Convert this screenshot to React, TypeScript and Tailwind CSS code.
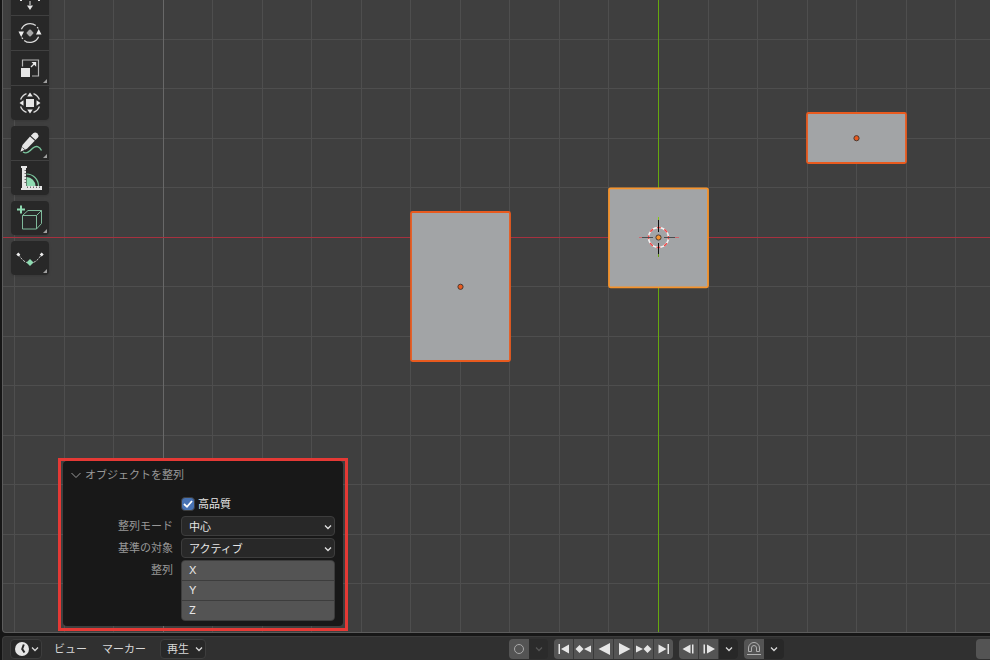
import React from 'react'

const STEP = 49.54
const ROW_STEP = 49.5

const GridLines = () => {
    const cols = Array.from({ length: 61 }, (_, i) => i - 30)
    return (
        <g shapeRendering="crispEdges">
            {cols.map((n) => (
                <rect key={`h${n}`} x={-3000} y={Math.round(n * ROW_STEP - 0.25)} width={6000} height={1} fill={n % 10 ? '#4e4e4e' : '#686868'} />
            ))}
            {cols.map((n) => (
                <rect key={`v${n}`} x={Math.round(n * STEP)} y={-3000} width={1} height={6000} fill={n % 10 ? '#4e4e4e' : '#686868'} />
            ))}
            <rect x={-3000} y={0} width={6000} height={1} fill="#a6313f" />
            <rect x={0} y={-3000} width={1} height={6000} fill="#67a80e" />
        </g>
    )
}

type MeshProps = { x: number; y: number; w: number; h: number; color: string }

const Mesh = ({ x, y, w, h, color }: MeshProps) => (
    <rect x={x - w / 2} y={y - h / 2} width={w} height={h} rx={1.5} fill="#a2a4a6" stroke={color} strokeWidth={1.8} />
)

const Origin = ({ x, y, color }: { x: number; y: number; color: string }) => (
    <circle cx={x} cy={y} r={2.6} fill={color} stroke="#4a3a33" strokeWidth={1} />
)

const Scene = () => (
    <svg className="absolute inset-0 h-full w-full" aria-hidden="true">
        <svg x={655} y={237} overflow="visible">
            <GridLines />
            <Mesh x={-197.5} y={49.5} w={99} h={149} color="#e95a1e" />
            <Mesh x={198.5} y={-99} w={99} h={50} color="#e95a1e" />
            <Mesh x={0.5} y={0.8} w={99} h={99} color="#f6932c" />
            <Origin x={-197.5} y={49.8} color="#e95a1e" />
            <Origin x={198.5} y={-98.8} color="#e95a1e" />

            {/* 3D cursor */}
            <circle cx={0.5} cy={0.5} r={10} fill="none" stroke="#f2f2f2" strokeWidth={1.5} />
            <circle cx={0.5} cy={0.5} r={10} fill="none" stroke="#f04848" strokeWidth={1.5} strokeDasharray="3.93" strokeDashoffset={2} />
            <g shapeRendering="crispEdges">
                <rect x={0} y={-17} width={1} height={12} fill="#111" />
                <rect x={0} y={6} width={1} height={11} fill="#111" />
                <rect x={0} y={-20} width={1} height={3} fill="#86c814" />
                <rect x={0} y={17} width={1} height={3} fill="#67a012" />
                <rect x={-17} y={0} width={12} height={1} fill="#4c4e50" />
                <rect x={6} y={0} width={12} height={1} fill="#4c4e50" />
                <rect x={-19} y={0} width={3} height={1} fill="#cc6b70" />
                <rect x={17} y={0} width={4} height={1} fill="#cc6b70" />
            </g>
            <Origin x={0.5} y={0.5} color="#f6932c" />
        </svg>
    </svg>
)

const Corner = () => <path d="M36 28v4h-4z" fill="#a0a0a0" />

const MoveIcon = () => (
    <g fill="#e6e6e6">
        <path d="M16 24.5h6L19 29z" />
        <path d="M18.5 20h1v4h-1z" />
        <path d="M9 19h2v1H9zM27 19h2v1h-2z" />
    </g>
)

const RotateIcon = () => (
    <>
        <path d="M10.4 13.2A9.4 9.4 0 0 1 24.8 9.6M27.6 20.8A9.4 9.4 0 0 1 13.2 24.4M26.2 11l1 1.500M11.800 23l-1-1.500" fill="none" stroke="#d8d8d8" strokeWidth="1.3" />
        <path d="M7.500 15.500h5.500L10.200 21zM25 18.500h5.500L27.700 13z" fill="#ececec" />
        <path d="M19 13.300l1.200 1 2.500 2.700-2.500 2.700-1.200 1-1.200-1-2.500-2.700 2.500-2.700z" fill="#a8a8a8" />
    </>
)

const ScaleIcon = () => (
    <>
        <path d="M11.500 15.500V9h16v16H21" fill="none" stroke="#b4b4b4" strokeWidth="1.200" />
        <path d="M10 17h9v9h-9z" fill="#e6e6e6" />
        <path d="M20 16l3.500-3.500" stroke="#e6e6e6" strokeWidth="1.200" />
        <path d="M20.500 11H25.200V15.700z" fill="#ececec" />
        <Corner />
    </>
)

const TransformIcon = () => (
    <>
        <path d="M15.500 7.600A10 10 0 0 0 9.600 13.500M22.500 7.600A10 10 0 0 1 28.400 13.500M28.400 20.500A10 10 0 0 1 22.500 26.400M15.500 26.400A10 10 0 0 1 9.600 20.500" fill="none" stroke="#d8d8d8" strokeWidth="1.300" />
        <path d="M15 13h8v8h-8z" fill="#e6e6e6" />
        <path d="M16.200 10.500h5.600L19 6.500zM16.200 23.500h5.600L19 27.500zM12.500 14.200v5.600L8.500 17zM25.500 14.200v5.600L29.500 17z" fill="#ececec" />
    </>
)

const AnnotateIcon = () => (
    <>
        <path d="M12 26C16 28.500 19 25 22 22C25 19.500 28.500 20 30.500 24.500" fill="none" stroke="#79c49c" strokeWidth="1.400" />
        <path d="M9.400 25.700L11.500 19L19 10.500L23.800 14.800L16 22.800z" fill="#e6e6e6" />
        <path d="M19.800 9.700L22.200 7.300Q24.300 5.800 26.400 7.500Q28.400 9.700 26.900 11.600L24.600 14z" fill="#e6e6e6" />
        <path d="M11.500 21.500l2.400 2.200" stroke="#555" strokeWidth="1" />
        <Corner />
    </>
)

const MeasureIcon = () => (
    <>
        <path d="M15.500 16A9 9 0 0 1 24.500 25H15.500z" fill="#8fdbb2" />
        <path d="M15.500 13A12 12 0 0 1 27.500 25" fill="none" stroke="#79c49c" strokeWidth="1.200" />
        <path d="M10 5h6v2h-1v18h16v4H10v-2h1V7h-1z" fill="#e6e6e6" />
        <path d="M13.500 9.500h1.500M13.500 12.500h1.500M13.500 15.500h1.500M13.500 18.500h1.500M13.500 21.500h1.500M16.500 25.500v1.500M19.500 25.500v1.500M22.500 25.500v1.500M25.500 25.500v1.500M28.500 25.500v1.500" stroke="#6a6a6a" strokeWidth="1" />
    </>
)

const CubeIcon = () => (
    <>
        <path d="M11.500 14.500h14v13.500h-14zM11.500 14.500L17 9.500H30.500L25.500 14.500M30.500 9.500V22.500L25.500 28" fill="none" stroke="#7fb99a" strokeWidth="1" />
        <path d="M10 4.500v8M6 8.500h8" stroke="#8fdbb2" strokeWidth="2" />
        <Corner />
    </>
)

const CurveIcon = () => (
    <>
        <path d="M7.500 13.500C11 19 14 22 19 22S27 19 30.500 13.500" fill="none" stroke="#c4c4c4" strokeWidth="1" strokeDasharray="2.500 1.200" />
        <path d="M7.300 11.500l2 2-2 2-2-2zM30.700 11.500l2 2-2 2-2-2z" fill="#ececec" />
        <path d="M19 18l3.500 3.500-3.500 3.500-3.500-3.500z" fill="#8fdbb2" />
        <Corner />
    </>
)

const toolGroups = [
    [
        { name: '移動', icon: <MoveIcon /> },
        { name: '回転', icon: <RotateIcon /> },
        { name: 'スケール', icon: <ScaleIcon /> },
        { name: 'トランスフォーム', icon: <TransformIcon /> },
    ],
    [
        { name: 'アノテート', icon: <AnnotateIcon /> },
        { name: 'メジャー', icon: <MeasureIcon /> },
    ],
    [{ name: '立方体を追加', icon: <CubeIcon /> }],
    [{ name: 'カーブ', icon: <CurveIcon /> }],
]

const Toolbar = () => (
    <div className="relative -mt-5 ml-2 flex w-[38px] flex-col gap-1.5 pt-px">
        {toolGroups.map((group, i) => (
            <div key={i} className="flex flex-col gap-px overflow-hidden rounded bg-[#404040] shadow-sm">
                {group.map((tool) => (
                    <button key={tool.name} aria-label={tool.name} className="h-[34px] bg-[#282828]">
                        <svg viewBox="0 0 38 34" className="h-full w-full">{tool.icon}</svg>
                    </button>
                ))}
            </div>
        ))}
    </div>
)

const Chevron = ({ className }: { className?: string }) => (
    <svg viewBox="0 0 8 8" className={`h-2 w-2 ${className ?? ''}`} fill="none" stroke="currentColor" strokeWidth="1.300">
        <path d="M1 2.500L4 5.500L7 2.500" />
    </svg>
)

const SelectRow = ({ id, label, value }: { id: string; label: string; value: string }) => (
    <div className="flex items-center gap-2">
        <label htmlFor={id} className="w-[110px] text-right text-[#989898]">{label}</label>
        <div className="relative flex-1">
            <select id={id} className="block h-5 w-full appearance-none rounded border border-[#3d3d3d] bg-[#282828] pl-[7px] text-[#e6e6e6]">
                <option>{value}</option>
            </select>
            <Chevron className="pointer-events-none absolute right-[3px] top-[7px] text-[#e0e0e0]" />
        </div>
    </div>
)

const AlignPanel = () => (
    <div className="absolute bottom-px left-[55px] w-[290px] border-3 border-[#e53935] px-0.5 pb-0.5">
        <div className="rounded bg-[#181818] pb-[5px] pr-2 leading-5">
            <button className="flex h-[27px] items-center gap-1 pl-2 text-[#989898]">
                <svg viewBox="0 0 10 10" className="h-2.5 w-2.5" fill="none" stroke="currentColor">
                    <path d="M0.500 3L5 7.500L9.500 3" />
                </svg>
                オブジェクトを整列
            </button>
            <div className="flex flex-col gap-0.5 pt-1.5">
                <div className="flex h-5 items-center gap-[3px] pl-[118px]">
                    <div className="relative h-3.5 w-3.5">
                        <input id="quality" type="checkbox" defaultChecked className="block h-full w-full appearance-none rounded-sm border border-[#3d3d3d] bg-[#4772b3]" />
                        <svg viewBox="0 0 14 14" className="pointer-events-none absolute inset-0" fill="none" stroke="#fff" strokeWidth="1.800">
                            <path d="M3 7L6 9.800L11 4" />
                        </svg>
                    </div>
                    <label htmlFor="quality" className="text-[#e6e6e6]">高品質</label>
                </div>
                <SelectRow id="mode" label="整列モード" value="中心" />
                <SelectRow id="relative" label="基準の対象" value="アクティブ" />
                <div className="flex gap-2">
                    <p className="w-[110px] text-right text-[#989898]">整列</p>
                    <div className="flex flex-1 flex-col gap-px overflow-hidden rounded border border-[#3d3d3d] bg-[#3d3d3d]">
                        {['X', 'Y', 'Z'].map((axis) => (
                            <button key={axis} className="h-[19px] bg-[#545454] pl-[7px] text-left leading-[19px] text-[#e6e6e6]">{axis}</button>
                        ))}
                    </div>
                </div>
            </div>
        </div>
    </div>
)

const playback = [
    { name: '開始フレームへ', d: 'M4.500 5H6v10H4.500zM15 5.500v9L7 10z' },
    { name: '前のキーフレーム', d: 'M5.500 6l4 4-4 4-4-4zM17 6.500v7L10 10z' },
    { name: '逆再生', d: 'M16 4v12L4.500 10z' },
    { name: '再生', d: 'M5 4v12L16.500 10z' },
    { name: '次のキーフレーム', d: 'M2 6.500v7L9 10zM13.500 6l4 4-4 4-4-4z' },
    { name: '終了フレームへ', d: 'M4.500 5.500v9L12.500 10zM13.500 5h1.500v10h-1.500z' },
]

const frameJump = [
    { name: '前のフレーム', d: 'M11.500 5.500v9L3.500 10zM13 5.500h1.500v9H13z' },
    { name: '次のフレーム', d: 'M4.500 5.500H6v9H4.500zM8 5.500v9L16 10z' },
]

const IconButton = ({ name, d }: { name: string; d: string }) => (
    <button aria-label={name} className="w-[19px] bg-[#545454]">
        <svg viewBox="0 0 19 20" className="h-5 w-full" fill="#e6e6e6"><path d={d} /></svg>
    </button>
)

const Timeline = () => (
    <div className="flex h-6 items-start rounded-tl border-l border-t border-[#3c3c3c] bg-[#303030] pt-0.5 text-[#d8d8d8]">
        <button aria-label="エディタータイプ" className="ml-[7px] flex h-5 w-8 items-center justify-between rounded border border-[#3d3d3d] bg-[#282828] pl-1 pr-0.5">
            <svg viewBox="0 0 14 14" className="h-3.5 w-3.5">
                <circle cx="7" cy="7" r="7" fill="#e6e6e6" />
                <path d="M8.800 2.500L7.200 7l2.300 3.500" fill="none" stroke="#282828" strokeWidth="2" />
            </svg>
            <Chevron />
        </button>
        <button className="ml-3 h-5">ビュー</button>
        <button className="ml-[15px] h-5">マーカー</button>
        <button className="ml-3.5 flex h-5 items-center gap-1.5 rounded border border-[#3d3d3d] bg-[#282828] pl-1.5 pr-0.5">
            再生
            <Chevron />
        </button>

        <div className="ml-auto mr-48 flex h-5 gap-1.5">
            <div className="flex w-[39px] overflow-hidden rounded">
                <button aria-label="自動キー挿入" className="w-5 bg-[#545454]">
                    <svg viewBox="0 0 20 20" className="h-5 w-5" fill="none" stroke="#a8a8a8"><circle cx="10" cy="10" r="4.500" /></svg>
                </button>
                <button aria-label="キー挿入設定" className="flex flex-1 items-center justify-center bg-[#2b2b2b] text-[#555]"><Chevron /></button>
            </div>
            <div className="flex gap-px overflow-hidden rounded bg-[#3a3a3a]">
                {playback.map((item) => <IconButton key={item.name} {...item} />)}
            </div>
            <div className="flex gap-px overflow-hidden rounded bg-[#3a3a3a]">
                {frameJump.map((item) => <IconButton key={item.name} {...item} />)}
                <button aria-label="再生設定" className="flex w-[19px] items-center justify-center bg-[#282828]"><Chevron /></button>
            </div>
            <div className="flex w-10 overflow-hidden rounded">
                <button aria-label="スナップ" className="w-5 bg-[#545454]">
                    <svg viewBox="0 0 20 20" className="h-5 w-5" fill="none" stroke="#b0b0b0">
                        <path d="M4.500 12.500V9a5.500 5.500 0 0 1 11 0v3.500h-3V9a2.500 2.500 0 0 0-5 0v3.500zM3 15.500h14" />
                    </svg>
                </button>
                <button aria-label="スナップ設定" className="flex flex-1 items-center justify-center bg-[#282828]"><Chevron /></button>
            </div>
        </div>
        <button aria-label="現在のフレーム" className="h-5 w-3.5 rounded-l bg-[#545454]"></button>
    </div>
)

const App = () => {
    return (
        <div className="flex h-screen flex-col gap-[3px] overflow-hidden bg-[#161616] pl-0.5 font-['Inter','Noto_Sans_CJK_JP',sans-serif] text-[11px]">
            <div className="relative min-h-0 flex-1 overflow-hidden rounded-bl border-b border-l border-[#5c5c5c] bg-[#3f3f3f]">
                <Scene />
                <Toolbar />
                <AlignPanel />
            </div>
            <Timeline />
        </div>
    )
}

export default App
